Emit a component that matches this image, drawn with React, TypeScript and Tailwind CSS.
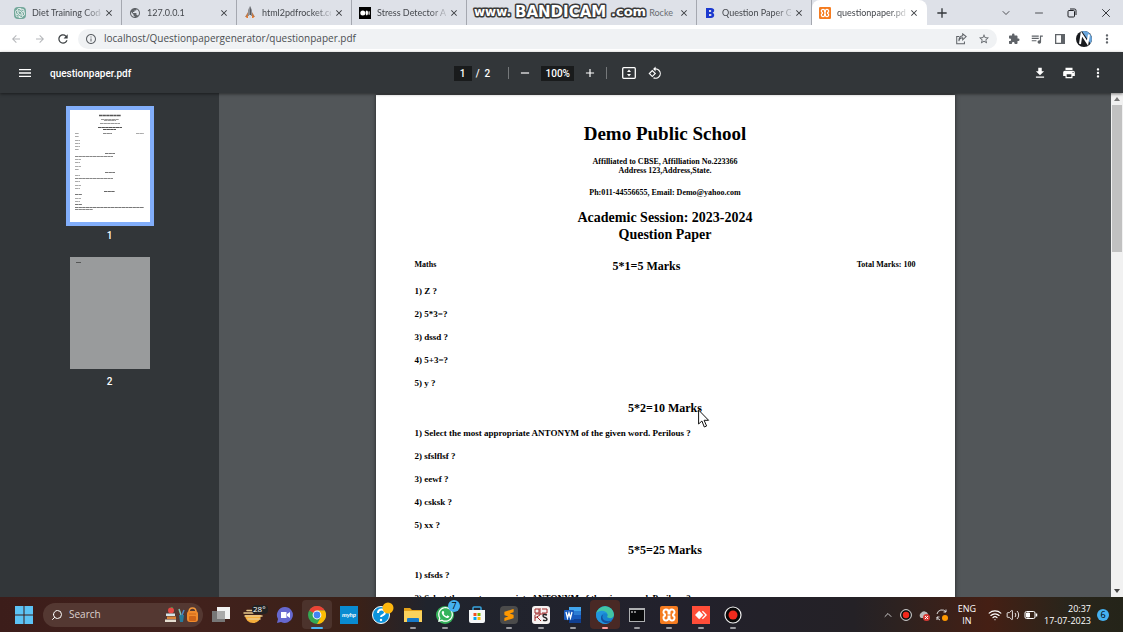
import React from 'react';
import {
  MdMenu, MdRemove, MdAdd, MdPrint, MdMoreVert, MdRotate90DegreesCcw, MdArrowBack, MdArrowForward,
  MdRefresh, MdInfoOutline, MdExtension, MdQueueMusic, MdStarBorder, MdPublic, MdClose, MdFileDownload,
} from 'react-icons/md';
import { SiOpenai, SiAnydesk, SiSublimetext } from 'react-icons/si';
import { FaWhatsapp } from 'react-icons/fa';
import { ChevronDown, ChevronUp, Search, Wifi, Volume2, Minus, X } from 'lucide-react';

function XamppIcon({ className }: { className: string }) {
  return (
    <svg viewBox="0 0 18 18" className={`shrink-0 ${className}`}>
      <rect width="18" height="18" rx="2" fill="#f57c20" />
      <path d="M6 3.500a2.500 2.500 0 0 0-1 4.800v1.400a2.500 2.500 0 1 0 3.500 2.300v-1.500h1V12A2.500 2.500 0 1 0 13 9.700V8.300A2.500 2.500 0 1 0 9.500 6v1.500h-1V6A2.500 2.500 0 0 0 6 3.500z" fill="none" stroke="#fff" strokeWidth="1.900" />
    </svg>
  );
}

function RocketIcon() {
  return (
    <svg viewBox="0 0 12 14" className="h-3.5 w-3 shrink-0">
      <path d="M6 0 8 4v6H4V4z" fill="#8d8f94" />
      <path d="M6 0 7 4v6H6z" fill="#55575c" />
      <path d="M4 6 1 11h3zM8 6l3 5H8z" fill="#b9794e" />
      <path d="M2 12l2-3v3zM8 9l2 3H8z" fill="#ee7b2a" />
      <path d="M5 9h2v3H5z" fill="#d9dadd" />
    </svg>
  );
}

function MediumIcon() {
  return (
    <svg viewBox="0 0 12 12" className="h-3 w-3 shrink-0">
      <rect width="12" height="12" fill="#000" />
      <circle cx="3.8" cy="6" r="2.5" fill="#fff" />
      <ellipse cx="7.8" cy="6" rx="1.2" ry="2.4" fill="#fff" />
      <ellipse cx="10.1" cy="6" rx=".6" ry="2.1" fill="#fff" />
    </svg>
  );
}

function BIcon() {
  return (
    <svg viewBox="0 0 10 12" className="h-3 w-3 shrink-0">
      <path fillRule="evenodd" d="M1 1h5c4 0 4 4 1.500 4.800C10 6.500 10 11 6 11H1zM4 3v2h1.500c1 0 1-2 0-2zM4 7v2h1.500c1.400 0 1.400-2 0-2z" fill="#1c39cf" />
    </svg>
  );
}

type TabInfo = { title: string; icon: React.ReactNode; active?: boolean };

const leftTabs: TabInfo[] = [
  {
    title: 'Diet Training Code',
    icon: <span className="flex h-3 w-3 shrink-0 items-center justify-center rounded-sm bg-[#74a89b] text-white"><SiOpenai className="h-2.5 w-2.5" /></span>,
  },
  { title: '127.0.0.1', icon: <MdPublic className="h-3 w-3 shrink-0 text-[#5f6368]" /> },
  { title: 'html2pdfrocket.co', icon: <RocketIcon /> },
  { title: 'Stress Detector AI', icon: <MediumIcon /> },
];

const rightTabs: TabInfo[] = [
  { title: 'Question Paper G', icon: <BIcon /> },
  { title: 'questionpaper.pd', icon: <XamppIcon className="h-3 w-3" />, active: true },
];

function Tab({ title, icon, active }: TabInfo) {
  return (
    <div className={`flex h-full min-w-0 items-center border-r pl-[7px] pr-[7px] ${active ? 'rounded-t-lg border-transparent bg-white' : 'border-[#a5a8b0]'}`}>
      {icon}
      <button type="button" className="ml-1.5 min-w-0 flex-1 whitespace-nowrap text-left text-[9px] text-[#45484d] [mask-image:linear-gradient(90deg,#000_75%,rgba(0,0,0,0.2))]">
        {title}
      </button>
      <button type="button" aria-label="Close tab" className="ml-[3px] text-[#33363a]"><MdClose className="h-2.5 w-2.5" /></button>
    </div>
  );
}

function TabStrip() {
  return (
    <header className="relative flex h-[25px] shrink-0 items-center bg-[#dee1e8] pl-[7px] font-[Lato,sans-serif]">
      <div className="grid h-full w-[920px] shrink grid-cols-8 items-center">
        {leftTabs.map((t) => <Tab key={t.title} {...t} />)}
        <div className="col-span-2 flex h-full min-w-0 items-center justify-end border-r border-[#a5a8b0] pr-[7px]">
          <span className="text-[9px] text-[#6a6d73]">Rocke</span>
          <button type="button" aria-label="Close tab" className="ml-1.5 text-[#33363a]"><MdClose className="h-2.5 w-2.5" /></button>
        </div>
        {rightTabs.map((t) => <Tab key={t.title} {...t} />)}
      </div>
      <button type="button" aria-label="New tab" className="ml-[7px] text-[#33363a]"><MdAdd className="h-4 w-4" /></button>
      <div className="ml-auto flex items-center gap-[21px] pr-2.5 text-[#1f2024]">
        <button type="button" aria-label="Search tabs"><ChevronDown className="h-3 w-3" strokeWidth={1.5} /></button>
        <button type="button" aria-label="Minimize"><Minus className="h-3 w-3" strokeWidth={1.5} /></button>
        <button type="button" aria-label="Restore">
          <svg viewBox="0 0 12 12" className="h-3 w-3" fill="none" stroke="currentColor"><rect x="2" y="3.500" width="6.500" height="6.500" rx="1" /><path d="M4 2h4.500q1.500 0 1.500 1.500V8" /></svg>
        </button>
        <button type="button" aria-label="Close"><X className="h-3.5 w-3.5" strokeWidth={1.5} /></button>
      </div>
      <svg viewBox="0 0 180 18" className="absolute left-[472px] top-[3px] h-[18px] w-[180px]" aria-label="www.BANDICAM.com">
        <g fontFamily="DejaVu Sans, sans-serif" fontWeight="700" fill="#fff" stroke="#3a3a3a" strokeWidth="3" paintOrder="stroke" strokeLinejoin="round">
          <text x="2" y="13" fontSize="12">www.</text>
          <text x="43" y="14" fontSize="15">BANDICAM</text>
          <text x="139" y="13" fontSize="13">.com</text>
        </g>
      </svg>
    </header>
  );
}

function AddressBar() {
  return (
    <div className="flex h-[27px] shrink-0 items-center bg-white pl-2.5 pr-[9px] text-[#5f6368]">
      <button type="button" aria-label="Back" className="text-[#b4b6b9]"><MdArrowBack className="h-3 w-3" /></button>
      <button type="button" aria-label="Forward" className="ml-3 text-[#b4b6b9]"><MdArrowForward className="h-3 w-3" /></button>
      <button type="button" aria-label="Reload" className="ml-2.5 text-[#3c4043]"><MdRefresh className="h-3.5 w-3.5" /></button>
      <div className="ml-2 flex h-5 flex-1 items-center rounded-full bg-[#f0f2f4] px-[7px]">
        <MdInfoOutline className="h-3 w-3 shrink-0" />
        <input aria-label="Address" defaultValue="localhost/Questionpapergenerator/questionpaper.pdf" className="ml-[7px] min-w-0 flex-1 bg-transparent text-[10px] text-[#4b4e52] outline-none" />
        <button type="button" aria-label="Share">
          <svg viewBox="0 0 14 14" className="h-3 w-3" fill="none" stroke="currentColor" strokeWidth="1.200"><path d="M5 4H2v8.500h9V10M4.500 9.500C5 6.500 7 5.500 9 5.500V8l4-3.800L9 1v2.200C6 3.500 4.500 6 4.500 9.500z" /></svg>
        </button>
        <button type="button" aria-label="Bookmark" className="ml-[11px]"><MdStarBorder className="h-3 w-3" /></button>
      </div>
      <div className="ml-[11px] flex items-center gap-2.5">
        <button type="button" aria-label="Extensions"><MdExtension className="h-3 w-3" /></button>
        <button type="button" aria-label="Media"><MdQueueMusic className="h-3.5 w-3.5" /></button>
        <button type="button" aria-label="Side panel">
          <svg viewBox="0 0 12 12" className="h-3 w-3"><path fillRule="evenodd" d="M1 1h10v10H1zm1.300 1.300v7.400H7V2.300z" fill="currentColor" /></svg>
        </button>
        <button type="button" aria-label="Profile">
          <svg viewBox="0 0 16 16" className="h-4 w-4"><circle cx="8" cy="8" r="8" fill="#17191d" /><path d="M6 .3A8 8 0 0 1 14.500 12.500z" fill="#6aa6dc" /><path d="M4 13 5.500 3l6 9L13 3.500" fill="none" stroke="#fff" strokeWidth="2" /></svg>
        </button>
        <button type="button" aria-label="Menu" className="-ml-0.5"><MdMoreVert className="h-3.5 w-3.5" /></button>
      </div>
    </div>
  );
}

function PdfToolbar() {
  return (
    <div className="z-10 grid h-[41px] shrink-0 grid-cols-3 items-center bg-[#323639] pl-[17px] pr-[18px] pt-px font-[Roboto,sans-serif] text-white shadow-[0_1px_3px_rgba(0,0,0,0.5)]">
      <div className="flex items-center">
        <button type="button" aria-label="Toggle sidebar"><MdMenu className="h-4 w-4" /></button>
        <h1 className="ml-[17px] text-[10px] font-medium">questionpaper.pdf</h1>
      </div>
      <div className="flex items-center justify-center pr-1.5 text-[10px] font-medium">
        <input aria-label="Page" defaultValue="1" className="h-[15px] w-[18px] bg-[#191b1c] text-center outline-none" />
        <span className="ml-1 whitespace-pre">/  2</span>
        <span className="ml-[18px] h-3 w-px bg-[#75787a]" />
        <button type="button" aria-label="Zoom out" className="ml-[9px]"><MdRemove className="h-3.5 w-3.5" /></button>
        <input aria-label="Zoom" defaultValue="100%" className="ml-[9px] h-[15px] w-[33px] bg-[#191b1c] text-center outline-none" />
        <button type="button" aria-label="Zoom in" className="ml-[9px]"><MdAdd className="h-3.5 w-3.5" /></button>
        <span className="ml-[9px] h-3 w-px bg-[#75787a]" />
        <button type="button" aria-label="Fit to page" className="ml-[15px]">
          <svg viewBox="0 0 14 12" className="h-3 w-3.5" fill="none" stroke="currentColor" strokeWidth="1.300"><rect x=".7" y=".7" width="12.600" height="10.600" rx="1" /><path d="M7 2.500 9 5H5zM7 9.500 9 7H5z" fill="currentColor" stroke="none" /></svg>
        </button>
        <button type="button" aria-label="Rotate" className="ml-3"><MdRotate90DegreesCcw className="h-3.5 w-3.5" /></button>
      </div>
      <div className="flex items-center justify-end gap-[15px]">
        <button type="button" aria-label="Download"><MdFileDownload className="h-3.5 w-3.5" /></button>
        <button type="button" aria-label="Print"><MdPrint className="h-3.5 w-3.5" /></button>
        <button type="button" aria-label="More"><MdMoreVert className="h-3.5 w-3.5" /></button>
      </div>
    </div>
  );
}

const thumbLines: [number, number, number, number][] = [
  [29, 5, 22, 1.4], [31, 9, 18, 0.6], [34, 10, 12, 0.6], [30, 13, 20, 0.6], [28, 17, 24, 1.1], [33, 19, 13, 1.1],
  [5, 23, 4, 0.5], [33, 23, 9, 0.7], [66, 23, 8, 0.5], [5, 26, 4, 0.5], [5, 30, 5, 0.5], [5, 33, 5, 0.5],
  [5, 36, 5, 0.5], [5, 39, 4, 0.5], [35, 43, 10, 0.8], [5, 46, 38, 0.7], [5, 49, 6, 0.5], [5, 52, 5, 0.5],
  [5, 56, 6, 0.5], [5, 59, 4, 0.5], [35, 62, 10, 0.8], [5, 65, 5, 0.5], [5, 68, 38, 0.7], [5, 71, 5, 0.5],
  [5, 75, 6, 0.5], [5, 78, 5, 0.5], [34, 81, 11, 0.9], [5, 84, 7, 0.8], [5, 88, 6, 0.5], [5, 91, 5, 0.5],
  [5, 94, 7, 0.8], [5, 97, 69, 0.8], [5, 99, 18, 0.7],
];

function Sidebar() {
  return (
    <nav aria-label="Pages" className="flex w-[219px] shrink-0 flex-col items-center bg-[#323639] pt-[13px] font-[Roboto,sans-serif] text-[10px] font-medium text-white">
      <button type="button" className="flex flex-col items-center">
        <svg viewBox="0 0 80 112" className="box-content h-28 w-20 border-4 border-[#82aefa] bg-white">
          {thumbLines.map(([x, y, w, s]) => (
            <path key={`${x}-${y}`} d={`M${x} ${y + 0.5}h${w}`} stroke="#555" strokeWidth={s} strokeDasharray="3.300 .3" />
          ))}
        </svg>
        <span className="mt-0.5 leading-4">1</span>
      </button>
      <button type="button" className="mt-[13px] flex flex-col items-center">
        <svg viewBox="0 0 80 112" className="h-28 w-20 bg-[#999b9c]"><path d="M6 5.500h5" stroke="#444" strokeWidth=".8" /></svg>
        <span className="mt-[5px] leading-4">2</span>
      </button>
    </nav>
  );
}

const sections: { marks: string; questions: string[] }[] = [
  { marks: '5*2=10 Marks', questions: ['Select the most appropriate ANTONYM of the given word. Perilous ?', 'sfslflsf ?', 'eewf ?', 'csksk ?', 'xx ?'] },
  { marks: '5*5=25 Marks', questions: ['sfsds ?', 'Select the most appropriate ANTONYM of the given word. Perilous ?'] },
];

function Questions({ items }: { items: string[] }) {
  return (
    <div className="flex flex-col gap-[11px] text-[9px] leading-[12px]">
      {items.map((q, i) => <p key={q}>{i + 1}) {q}</p>)}
    </div>
  );
}

function Viewer() {
  return (
    <main className="flex min-w-0 flex-1 bg-[#525659]">
      <div className="flex min-w-0 flex-1 justify-center overflow-hidden pt-0.5">
        <article className="h-[820px] w-[579px] shrink-0 bg-white px-[39px] pt-[27px] text-center font-['Liberation_Serif',serif] font-bold text-black shadow-[0_0_4px_rgba(0,0,0,0.6)]">
          <h2 className="text-[19px] leading-6">Demo Public School</h2>
          <p className="mt-[11px] text-[8px] leading-[9px]">Affilliated to CBSE, Affilliation No.223366<br />Address 123,Address,State.</p>
          <p className="mt-[13px] text-[8px] leading-[10px]">Ph:011-44556655, Email: Demo@yahoo.com</p>
          <h3 className="mt-[11px] text-[14px] leading-[17px]">Academic Session: 2023-2024<br />Question Paper</h3>
          <div className="mt-4 flex items-start justify-between text-[8px] leading-[12px]">
            <span>Maths</span>
            <h4 className="text-[12px] leading-[14px]">5*1=5 Marks</h4>
            <span>Total Marks: 100</span>
          </div>
          <div className="mt-3 text-left"><Questions items={['Z ?', '5*3=?', 'dssd ?', '5+3=?', 'y ?']} /></div>
          {sections.map((s) => (
            <section key={s.marks} className="mt-[11px] text-left">
              <h4 className="mb-[11px] text-center text-[12px] leading-[16px]">{s.marks}</h4>
              <Questions items={s.questions} />
            </section>
          ))}
        </article>
      </div>
      <div className="flex w-3 flex-col items-center justify-between bg-[#f1f1f1] py-1">
        <div className="flex flex-col items-center gap-1">
          <svg viewBox="0 0 6 4" className="h-1 w-1.5"><path d="M0 4h6L3 0z" fill="#777" /></svg>
          <div className="h-[147px] w-2.5 bg-[#c1c1c1]" />
        </div>
        <svg viewBox="0 0 6 4" className="h-1 w-1.5"><path d="M0 0h6L3 4z" fill="#444" /></svg>
      </div>
    </main>
  );
}

function WindowsIcon() {
  return <svg viewBox="0 0 18 18" className="h-[18px] w-[18px]"><path d="M0 0h8.500v8.500H0zM9.500 0H18v8.500H9.500zM0 9.500h8.500V18H0zM9.500 9.500H18V18H9.500z" fill="#5cc3f5" /></svg>;
}

function SearchArt() {
  return (
    <svg viewBox="0 0 34 16" className="h-4 w-[34px] shrink-0">
      <circle cx="6" cy="3.500" r="3" fill="#e64a45" /><path d="M6 1q1-1 2-1" stroke="#4c9b48" fill="none" />
      <path d="M1 6.500h9V9H1z" fill="#d5e5e9" /><path d="M2 9.500h9V12H2z" fill="#d9843b" /><path d="M0 12.500h11V15H0z" fill="#e6ded1" />
      <path d="M14 8h5l-1 7h-3z" fill="#277b9c" /><path d="M14 2l2 6" stroke="#7ec2b2" strokeWidth="1.500" /><path d="M19 3l-2 5" stroke="#4c86c9" strokeWidth="1.500" />
      <path d="M24 5q0-4 3.500-4T31 5" fill="none" stroke="#f59a3c" strokeWidth="1.500" /><rect x="22" y="4" width="11" height="11" rx="3" fill="#f08a2c" /><rect x="24" y="9" width="7" height="5" rx="1" fill="#cf6418" /><path d="M24 7h7" stroke="#cf6418" />
    </svg>
  );
}

function ChromeIcon() {
  return (
    <svg viewBox="0 0 18 18" className="h-[18px] w-[18px]">
      <circle cx="9" cy="9" r="9" fill="#34a853" />
      <path d="M9 9 1.200 4.500A9 9 0 0 1 16.800 4.500H9z" fill="#ea4335" />
      <path d="M16.800 4.500A9 9 0 0 1 9 18l4-7-4-6.500z" fill="#fbbc05" />
      <circle cx="9" cy="9" r="4.400" fill="#fff" /><circle cx="9" cy="9" r="3.400" fill="#4285f4" />
    </svg>
  );
}

const apps: { name: string; open?: boolean; active?: boolean; art: React.ReactNode }[] = [
  { name: 'Task view', art: <svg viewBox="0 0 18 18" className="h-[18px] w-[18px]"><path d="M5 1h13v12H5z" fill="#f2f2f2" /><path d="M0 5h13v11H0z" fill="#777" /><path d="M5 5h8v8H5z" fill="#aaa" /></svg> },
  {
    name: 'Weather',
    art: (
      <svg viewBox="0 0 26 20" className="ml-1 h-5 w-[26px] shrink-0">
        <path d="M3 10h16a8 8 0 0 1-16 0z" fill="#f5ad3b" /><path d="M5 5.500h8M2 8h9M3 11h17M6 14h12" stroke="#e8c98c" strokeWidth="1.500" strokeLinecap="round" />
        <rect x="10" y="0" width="16" height="9" rx="4" fill="#222" /><text x="11" y="7" fontSize="8" fill="#fff" fontFamily="Open Sans, sans-serif">28°</text>
      </svg>
    ),
  },
  { name: 'Chat', art: <svg viewBox="0 0 18 18" className="h-[18px] w-[18px]"><path d="M9 1a8 8 0 1 1-4 15l-4 1 1-4A8 8 0 0 1 9 1z" fill="#6668cf" /><path d="M5 6h5.500v6H5zM11 8l3-2v6l-3-2z" fill="#fff" /></svg> },
  { name: 'Chrome', open: true, active: true, art: <ChromeIcon /> },
  { name: 'myhp', art: <svg viewBox="0 0 18 18" className="h-[18px] w-[18px]"><path d="M0 0h18v18H0z" fill="#0a8bd1" /><text x="2" y="11" fontSize="6" fontStyle="italic" fontWeight="700" fill="#fff" fontFamily="Lato, sans-serif">myhp</text></svg> },
  {
    name: 'Help',
    art: (
      <svg viewBox="0 0 22 22" className="ml-1 mb-1 h-[22px] w-[22px]">
        <circle cx="9" cy="13" r="8.500" fill="#0b93dc" stroke="#fff" /><path d="M6 11q0-3.500 3.500-3.500T13 10.500Q13 12 11 13q-2 .7-2 2" fill="none" stroke="#fff" strokeWidth="2" /><circle cx="9" cy="18" r="1.200" fill="#fff" />
        <circle cx="16" cy="6" r="5.500" fill="#ffb70f" />
      </svg>
    ),
  },
  { name: 'Explorer', open: true, art: <svg viewBox="0 0 18 18" className="h-[18px] w-[18px]"><path d="M0 2h6l2 2h10v4H0z" fill="#e5a21a" /><path d="M0 5h18v11H0z" fill="#fbd25c" /><path d="M3 16v-3q0-1 1-1h10q1 0 1 1v3z" fill="#1679c9" /></svg> },
  {
    name: 'WhatsApp', open: true,
    art: (
      <span className="relative flex h-[22px] w-[22px] items-center justify-center">
        <span className="flex h-[18px] w-[18px] items-center justify-center rounded-full bg-[#35b35b] text-white"><FaWhatsapp className="h-[17px] w-[17px]" /></span>
        <span className="absolute -right-1 -top-1 flex h-3 w-3 items-center justify-center rounded-full bg-[#45b1f0] text-[9px] text-black">7</span>
      </span>
    ),
  },
  { name: 'Store', art: <svg viewBox="0 0 18 18" className="h-[18px] w-[18px]"><path d="M5 5V2q0-1 1-1h6q1 0 1 1v3" fill="none" stroke="#37a4dd" strokeWidth="1.500" /><path d="M1 4h16v11q0 2-2 2H3q-2 0-2-2z" fill="#f5f7f8" /><path d="M5.500 7h3v3h-3z" fill="#f25022" /><path d="M9.500 7h3v3h-3z" fill="#7fba00" /><path d="M5.500 11h3v3h-3z" fill="#00a4ef" /><path d="M9.500 11h3v3h-3z" fill="#ffb900" /></svg> },
  { name: 'Sublime Text', open: true, art: <span className="flex h-[18px] w-[18px] items-center justify-center rounded-sm bg-[#4b4b4b] text-[#ff9800]"><SiSublimetext className="h-3 w-3" /></span> },
  { name: 'KS', open: true, art: <svg viewBox="0 0 18 18" className="h-[18px] w-[18px]"><rect width="18" height="18" rx="3" fill="#f6f2f1" /><path d="M3 3h4v4H3zM10 3h5v4h-5M3 9v6M3 12l5-3M5 11l4 4M8 2v7M3 8h11" fill="none" stroke="#a32a2a" /><path d="M15 9q-4-1.500-4 1 0 1 2 1.500t2 1.800q0 2-4 1" fill="none" stroke="#222" strokeWidth="1.400" /></svg> },
  { name: 'Word', open: true, art: <svg viewBox="0 0 18 18" className="h-[18px] w-[18px]"><path d="M5 1h12v5H5z" fill="#41a5ee" /><path d="M5 5h12v4H5z" fill="#2b7cd3" /><path d="M5 9h12v4H5z" fill="#185abd" /><path d="M5 13h12v4H5z" fill="#103f91" /><rect y="4" width="10" height="10" rx="1" fill="#185abd" /><path d="M2 6l1.500 6L5 7l1.500 5L8 6" fill="none" stroke="#fff" strokeWidth="1.300" /></svg> },
  { name: 'Edge', open: true, active: true, art: <svg viewBox="0 0 18 18" className="h-[18px] w-[18px]"><circle cx="9" cy="9" r="9" fill="#1683cf" /><path d="M.2 7.500A9 9 0 0 1 18 8.500c0 4-5 4.500-7 2.500 1.500-2 .5-5-3-5S1 7 .2 7.500z" fill="#42c5a4" /><path d="M.2 7.500C3 3.500 10 4 11 8c-4-2-7 1-5.500 5s5 4.500 7.500 4A9 9 0 0 1 .2 7.500z" fill="#2195dc" /><path d="M7 9c-2 3 1 7 7 6 1-.3 2-1 2.500-1.700C14 19 5 18 5 12c0-2 1-3 2-3z" fill="#164f9c" /></svg> },
  { name: 'Terminal', open: true, art: <svg viewBox="0 0 18 18" className="h-[18px] w-[18px]"><path d="M1 2h16v14H1z" fill="#aeb0b2" /><path d="M2 4h14v11H2z" fill="#08090a" /><path d="M3 6h2M6 6h2" stroke="#fff" /></svg> },
  { name: 'XAMPP', open: true, art: <XamppIcon className="h-[18px] w-[18px]" /> },
  { name: 'AnyDesk', open: true, art: <span className="flex h-[18px] w-[18px] items-center justify-center bg-[#ff4d38] text-white"><SiAnydesk className="h-3 w-3" /></span> },
  { name: 'Bandicam', open: true, art: <svg viewBox="0 0 18 18" className="h-[18px] w-[18px]"><circle cx="9" cy="9" r="8" fill="#080808" stroke="#eee" strokeWidth="1.200" /><circle cx="9" cy="9" r="4.500" fill="#f12a1d" /></svg> },
];

function Taskbar() {
  return (
    <footer className="flex h-[35px] shrink-0 items-center bg-[linear-gradient(90deg,#3c1d1a_0%,#41211c_18%,#3a2118_32%,#20242d_38%,#22212c_60%,#242126_76%,#2d2220_80%,#451f14_88%,#29251b_95%,#242419_100%)] pl-[15px] pr-3.5 font-['Open_Sans',sans-serif] text-white">
      <button type="button" aria-label="Start"><WindowsIcon /></button>
      <label className="ml-2.5 flex h-6 w-40 shrink-0 items-center rounded-full bg-[#543832] pl-2 pr-1">
        <Search className="h-3 w-3 shrink-0 -scale-x-100" strokeWidth={2} />
        <input aria-label="Search" placeholder="Search" className="ml-1.5 w-0 flex-1 bg-transparent text-[10px] outline-none placeholder:text-[#ddd2d0]" />
        <SearchArt />
      </label>
      <div className="ml-0.5 flex h-full items-center">
        {apps.map((a) => (
          <button key={a.name} type="button" aria-label={a.name} className="flex h-full w-8 flex-col items-center justify-center">
            <span className={`relative flex h-[29px] w-[30px] items-center justify-center rounded ${a.active ? (a.name === 'Edge' ? 'bg-[#492925]' : 'bg-[#4c332c]') : ''}`}>
              {a.art}
              {a.open && <span className={`absolute bottom-0 h-0.5 rounded-full ${a.name === 'Chrome' ? 'w-3 bg-[#4cb5f5]' : a.name === 'Edge' ? 'w-1.5 bg-[#ff9c9c]' : 'w-1.5 bg-[#9b9ba0]'}`} />}
            </span>
          </button>
        ))}
      </div>
      <div className="ml-auto flex items-center text-[9px] leading-[12px]">
        <ChevronUp className="h-3 w-3" strokeWidth={1.5} />
        <svg viewBox="0 0 12 12" className="ml-1.5 h-3 w-3"><circle cx="6" cy="6" r="5.400" fill="#111" stroke="#ddd" /><circle cx="6" cy="6" r="3.200" fill="#f2281c" /></svg>
        <svg viewBox="0 0 12 12" className="ml-1.5 h-3 w-3"><path d="M3 9a3 3 0 0 1 0-5 4 4 0 0 1 7 1v4z" fill="#bbb" /><circle cx="8.500" cy="8.500" r="3.500" fill="#d83a35" /><path d="M7 7l3 3M10 7l-3 3" stroke="#fff" /></svg>
        <svg viewBox="0 0 12 12" className="ml-1.5 h-3 w-3" fill="none" stroke="#ddd"><path d="M1 5a5 5 0 0 1 9-2V.5M10 3H7.500M4 11a5 5 0 0 1-3-3v3M1 8h2.500" /><circle cx="9" cy="9" r="3" fill="#f90" stroke="none" /></svg>
        <span className="ml-2.5 text-center">ENG<br />IN</span>
        <Wifi className="ml-3 h-3.5 w-3.5" strokeWidth={2} />
        <Volume2 className="ml-1 h-3.5 w-3.5" strokeWidth={1.5} />
        <svg viewBox="0 0 14 10" className="ml-1 h-2.5 w-3.5" fill="none" stroke="#fff"><rect x="1" y="1.500" width="10" height="7" rx="1.500" /><path d="M2.500 3h3v4h-3z" fill="#fff" /><path d="M12.500 3.500v3" strokeWidth="1.500" /></svg>
        <span className="ml-1.5 text-right">20:37<br />17-07-2023</span>
        <span className="ml-1.5 flex h-3 w-3 items-center justify-center rounded-full bg-[#45b1f0] text-[9px] text-black">6</span>
      </div>
    </footer>
  );
}

export default function App() {
  return (
    <div className="relative flex h-screen flex-col overflow-hidden font-['Open_Sans',sans-serif]">
      <TabStrip />
      <AddressBar />
      <PdfToolbar />
      <div className="flex min-h-0 flex-1">
        <Sidebar />
        <Viewer />
      </div>
      <Taskbar />
      <svg viewBox="0 0 12 19" className="absolute left-[698px] top-[409px] h-[19px] w-3"><path d="M.6 1v14l3.300-3 2.400 6 2.300-1-2.500-5.700h4.500z" fill="#fff" stroke="#111" strokeWidth="1" /></svg>
    </div>
  );
}
